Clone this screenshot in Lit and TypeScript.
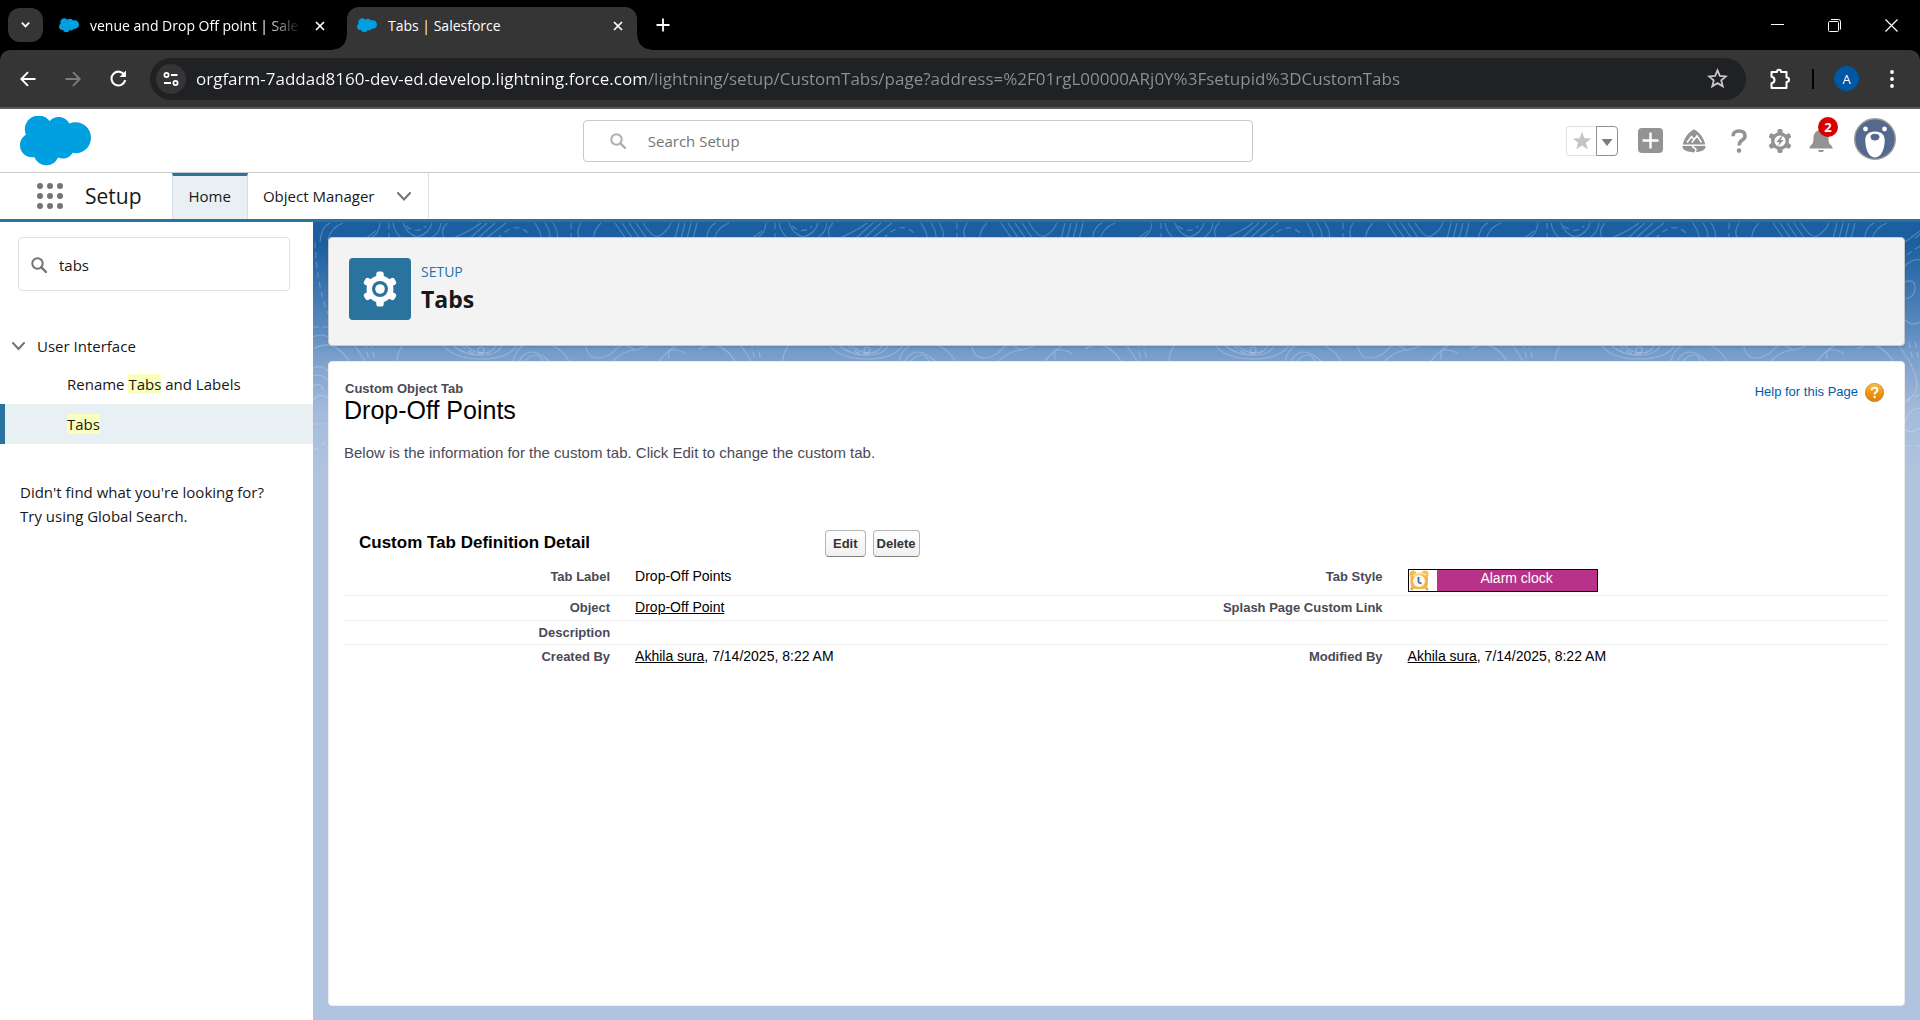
import { LitElement, html, svg, css } from "lit";
import { customElement } from "lit/decorators.js";

const cloud = svg`<path fill="#009fdf" d="M10.006 5.415a4.195 4.195 0 013.045-1.306c1.56 0 2.954.9 3.69 2.205.63-.3 1.35-.45 2.1-.45 2.85 0 5.159 2.34 5.159 5.22s-2.31 5.22-5.176 5.22c-.345 0-.69-.044-1.02-.104a3.75 3.75 0 01-3.3 1.95c-.6 0-1.155-.15-1.65-.375A4.314 4.314 0 018.88 20.4a4.302 4.302 0 01-4.05-2.82c-.27.062-.54.076-.825.076-2.204 0-4.005-1.8-4.005-4.05 0-1.5.811-2.805 2.01-3.51-.255-.57-.39-1.2-.39-1.846 0-2.58 2.1-4.65 4.65-4.65 1.53 0 2.85.705 3.72 1.8"/>`;

const teeth = [0, 60, 120].map(
  (a) => svg`<rect x="-3.4" y="-16" width="6.8" height="32" rx="2.4" transform="rotate(${a})"/>`
);

const magnifier = html`<svg class="magnifier" viewBox="0 0 16 16" width="16" height="16" aria-hidden="true">
  <circle cx="6.5" cy="6.5" r="5.2" fill="none" stroke="currentColor" stroke-width="2"/>
  <path d="M10.4 10.4L15 15" stroke="currentColor" stroke-width="2.4" stroke-linecap="round"/>
</svg>`;

const closeIcon = html`<svg viewBox="0 0 10 10" width="10" height="10" aria-hidden="true">
  <path d="M1 1L9 9M9 1L1 9" stroke="currentColor" stroke-width="1.7"/>
</svg>`;

@customElement("browser-chrome")
class BrowserChrome extends LitElement {
  static styles = css`
    :host { display: block; color: #fff; font-family: "Open Sans", "Noto Sans", sans-serif; font-size: 14px; }
    button { all: unset; display: flex; align-items: center; justify-content: center; box-sizing: border-box; flex: none; }
    svg { display: block; flex: none; }
    .strip { display: flex; align-items: center; height: 50px; background: #000; box-sizing: border-box; padding-left: 8px; }
    .search { width: 35px; height: 34px; border-radius: 12px; background: #353535; }
    .tab { display: flex; align-items: center; box-sizing: border-box; height: 43px; align-self: flex-end; padding: 0 10px 6px 10px; white-space: nowrap; }
    .idle { width: 304px; padding-left: 16px; padding-right: 18px; }
    .current { position: relative; width: 290px; background: #353535; border-radius: 12px 12px 0 0; }
    .current::before, .current::after { content: ""; position: absolute; bottom: 0; width: 14px; height: 14px; }
    .current::before { left: -14px; background: radial-gradient(circle at 0 0, transparent 13px, #353535 14px); }
    .current::after { right: -14px; background: radial-gradient(circle at 100% 0, transparent 13px, #353535 14px); }
    .title { flex: 1; margin-left: 11px; }
    .fade { mask-image: linear-gradient(90deg, #000 calc(100% - 36px), transparent); margin-right: 10px; }
    .close { width: 18px; height: 24px; }
    .plus { width: 24px; height: 24px; margin-left: 14px; }
    .window { display: flex; margin-left: auto; }
    .window button { width: 57px; height: 50px; }
    .barwrap { background: #000; }
    .bar { display: flex; align-items: center; height: 59px; box-sizing: border-box; padding: 0 16px 0 8px; background: #353535; border-bottom: 2px solid #5c5c5c; border-radius: 10px 10px 0 0; }
    .nav { width: 40px; height: 40px; margin-right: 5px; }
    .dim { color: #7d7d7d; }
    .omni { flex: 1; display: flex; align-items: center; height: 42px; border-radius: 21px; background: #202124; margin-left: 7px; padding: 0 18px 0 6px; }
    .site { width: 30px; height: 30px; border-radius: 15px; background: #353535; }
    .url { all: unset; flex: 1; margin-left: 10px; height: 40px; font: 17px "Open Sans", "Noto Sans", sans-serif; color: transparent;
      background: linear-gradient(90deg, #fff 450px, #8f9194 450px); background-clip: text; -webkit-background-clip: text; }
    .ext { width: 40px; height: 40px; margin-left: 14px; }
    .rule { width: 2px; height: 20px; background: #000; margin: 0 20px 0 12px; }
    .user { width: 25px; height: 25px; border-radius: 13px; background: #0057a3; font-size: 13px; }
    .more { width: 24px; height: 40px; margin-left: 21px; }
  `;

  render() {
    return html`
      <div class="strip">
        <button class="search" aria-label="Search tabs">
          <svg viewBox="0 0 12 8" width="11" height="8"><path d="M2 1.5L6 5.5L10 1.5" fill="none" stroke="#fff" stroke-width="2"/></svg>
        </button>
        <div class="tab idle">
          <svg viewBox="0 3.5 24 17.5" width="20" height="15">${cloud}</svg>
          <span class="title fade">venue and Drop Off point | Sale</span>
          <button class="close" aria-label="Close tab">${closeIcon}</button>
        </div>
        <div class="tab current">
          <svg viewBox="0 3.5 24 17.5" width="20" height="15">${cloud}</svg>
          <span class="title">Tabs | Salesforce</span>
          <button class="close" aria-label="Close tab">${closeIcon}</button>
        </div>
        <button class="plus" aria-label="New tab">
          <svg viewBox="0 0 14 14" width="14" height="14"><path d="M7 .5V13.5M.5 7H13.5" stroke="#fff" stroke-width="1.8"/></svg>
        </button>
        <div class="window">
          <button aria-label="Minimize"><svg viewBox="0 0 13 13" width="13" height="13"><path d="M0 5.5H13" stroke="#fff"/></svg></button>
          <button aria-label="Restore"><svg viewBox="0 0 13 13" width="13" height="13" fill="none" stroke="#fff"><rect x=".5" y="2.5" width="10" height="10" rx="1"/><path d="M3 .5H10.500Q12.500 .5 12.500 2.500V10.500"/></svg></button>
          <button aria-label="Close"><svg viewBox="0 0 13 13" width="13" height="13"><path d="M.5 .5L12.500 12.500M12.500 .5L.5 12.500" stroke="#fff" stroke-width="1.200"/></svg></button>
        </div>
      </div>
      <div class="barwrap"><div class="bar">
        <button class="nav" aria-label="Back"><svg viewBox="0 0 16 16" width="16" height="16"><path d="M15.500 8H1.500M8 1.200L1.300 8L8 14.800" fill="none" stroke="#fff" stroke-width="1.900"/></svg></button>
        <button class="nav dim" aria-label="Forward"><svg viewBox="0 0 16 16" width="16" height="16"><path d="M.5 8H14.500M8 1.200L14.700 8L8 14.800" fill="none" stroke="currentColor" stroke-width="1.900"/></svg></button>
        <button class="nav" aria-label="Reload"><svg viewBox="0 0 16 16" width="17" height="17"><path d="M13.600 4.800A6.500 6.500 0 1 0 14.300 9.500" fill="none" stroke="#fff" stroke-width="1.900"/><path d="M15 .5V6.500H9Z" fill="#fff"/></svg></button>
        <div class="omni">
          <button class="site" aria-label="View site information">
            <svg viewBox="0 0 16 14" width="16" height="14" fill="none" stroke="#fff" stroke-width="1.800"><circle cx="3.500" cy="3" r="2.100"/><path d="M8 3H14.500M1 11H8"/><circle cx="12.500" cy="11" r="2.100"/></svg>
          </button>
          <input class="url" aria-label="Address" spellcheck="false" value="orgfarm-7addad8160-dev-ed.develop.lightning.force.com/lightning/setup/CustomTabs/page?address=%2F01rgL00000ARj0Y%3Fsetupid%3DCustomTabs">
          <button aria-label="Bookmark this tab"><svg viewBox="0 0 20 20" width="21" height="21"><path d="M10 2.200L12.200 7.500L18 8L13.600 11.800L15 17.500L10 14.400L5 17.500L6.400 11.800L2 8L7.800 7.500Z" fill="none" stroke="#c7c7c7" stroke-width="1.700"/></svg></button>
        </div>
        <button class="ext" aria-label="Extensions">
          <svg viewBox="0 0 22 22" width="22" height="22"><path d="M3 4H8Q8 1.800 10 1.800T12 4H17.500V9.500Q20 9.500 20 11.700T17.500 14V20H2.500V15.200Q5.500 14.800 5.500 12T2.500 8.800V4Z" fill="none" stroke="#fff" stroke-width="2" stroke-linejoin="round"/></svg>
        </button>
        <span class="rule"></span>
        <button class="user" aria-label="Profile">A</button>
        <button class="more" aria-label="Menu"><svg viewBox="0 0 4 18" width="4" height="18" fill="#fff"><circle cx="2" cy="2" r="1.900"/><circle cx="2" cy="9" r="1.900"/><circle cx="2" cy="16" r="1.900"/></svg></button>
      </div></div>
    `;
  }
}

@customElement("global-header")
class GlobalHeader extends LitElement {
  static styles = css`
    :host { display: block; background: #fff; color: #181818; font-family: "Open Sans", "Noto Sans", sans-serif; font-size: 15px; }
    button { all: unset; display: flex; align-items: center; justify-content: center; box-sizing: border-box; flex: none; }
    svg { display: block; flex: none; }
    .top { display: grid; grid-template-columns: 7fr 670px 8fr; align-items: center; height: 64px; box-sizing: border-box; border-bottom: 1px solid #c9c9c9; padding: 0 24px 0 20px; }
    .find { display: flex; align-items: center; height: 42px; box-sizing: border-box; border: 1px solid #c9c9c9; border-radius: 4px; padding: 0 26px; color: #aeaeae; }
    .find input { all: unset; flex: 1; margin-left: 22px; color: #747474; }
    .find input::placeholder { color: #747474; opacity: 1; }
    .tools { display: flex; align-items: center; justify-content: flex-end; }
    .fav { height: 30px; width: 30px; border: 1px solid #e0e0e0; border-right: 0; border-radius: 4px 0 0 4px; }
    .favmenu { height: 30px; width: 22px; border: 1px solid #8f8f8f; border-radius: 0 4px 4px 0; margin-right: 20px; padding-top: 4px; }
    .astro { margin-left: 19px; }
    .help { margin-left: 25px; }
    .gear { margin-left: 21px; }
    .bell { position: relative; margin-left: 17px; }
    .badge { position: absolute; left: 9px; top: -12px; width: 20px; height: 20px; border-radius: 10px; background: #d80000; color: #fff; font-size: 13px; line-height: 20px; font-weight: 700; text-align: center; }
    .avatar { margin: 0 0 4px 21px; }
    .nav { display: flex; align-items: stretch; height: 49px; box-sizing: border-box; border-bottom: 3px solid #2a739e; padding-left: 37px; }
    .waffle { width: 26px; }
    .app { font-size: 21px; line-height: 46px; margin: 0 30px 0 22px; }
    .link { color: inherit; text-decoration: none; display: flex; align-items: center; padding: 0 15px; }
    .home { background: #e9f0f4; border-top: 3px solid #2a739e; border-left: 1px solid #d8dde6; border-right: 1px solid #d8dde6; padding: 0 16px 4px; }
    .object { padding: 0 11px 1px 15px; }
    .chev { padding: 0 17px 0 12px; border-right: 1px solid #e0e0e0; }
  `;

  render() {
    const dots = [3, 13, 23].flatMap((y) => [3, 13, 23].map((x) => svg`<circle cx=${x} cy=${y} r="3"/>`));
    return html`
      <header class="top">
        <svg viewBox="0 3.900 24 16.600" width="71" height="50" role="img" aria-label="Salesforce">${cloud}</svg>
        <label class="find">${magnifier}<input type="search" placeholder="Search Setup" aria-label="Search Setup"></label>
        <div class="tools">
          <button class="fav" aria-label="Favorite this item"><svg viewBox="0 0 20 20" width="20" height="20"><path fill="#c4c4c4" d="M10 .8L12.400 7.200L19.200 7.500L13.900 11.700L15.700 18.300L10 14.500L4.300 18.300L6.100 11.700L.8 7.500L7.600 7.200Z"/></svg></button>
          <button class="favmenu" aria-label="Favorites list"><svg viewBox="0 0 12 7" width="12" height="7"><path fill="#7c7c7c" d="M.5 0H11.500L6 7Z"/></svg></button>
          <button aria-label="Global actions"><svg viewBox="0 0 25 25" width="25" height="25"><rect width="25" height="25" rx="4" fill="#939393"/><path d="M12.500 4.500V20.500M4.500 12.500H20.500" stroke="#fff" stroke-width="2.400"/></svg></button>
          <button class="astro" aria-label="Guidance center">
            <svg viewBox="0 0 24 24" width="24" height="24">
              <path fill="#939393" d="M12 .5C14 1.200 17 3.400 19.500 7C21.800 10.300 23.300 14 23.500 18C23.500 20 21 21.600 18 22.600Q12 24.200 6 22.600C3 21.600 .5 20 .5 18C.7 14 2.200 10.300 4.500 7C7 3.400 10 1.200 12 .5Z"/>
              <path d="M0 16.200H24" stroke="#fff" stroke-width="1.400"/>
              <path d="M5 13.500L9.500 7.500L12 10.800L15 6.800L19.500 13.500M9.800 13.500L12 10.800M15 6.800V9" fill="none" stroke="#fff" stroke-width="1.500"/>
              <path d="M11.500 16.500Q9.500 18 12.500 19T12.500 24" fill="none" stroke="#fff" stroke-width="1.500"/>
            </svg>
          </button>
          <button class="help" aria-label="Help"><svg viewBox="0 0 16 24" width="16" height="24"><path d="M2 7.200Q2 2 8 2T14 7Q14 9.500 11 11.300Q8.200 13 8.200 16.500" fill="none" stroke="#939393" stroke-width="3.600"/><circle cx="8" cy="21.600" r="2.300" fill="#939393"/></svg></button>
          <button class="gear" aria-label="Setup">
            <svg viewBox="-16 -16 32 32" width="24" height="24"><g fill="#939393"><circle r="12"/>${teeth}</g><circle r="7.400" fill="#fff"/><path fill="#939393" d="M1.500 -6L-5 1.500H-1L-2.500 6.500L5 -1.500H.8L3.500 -6Z"/></svg>
          </button>
          <button class="bell" aria-label="Notifications">
            <svg viewBox="0 0 24 24" width="24" height="24" fill="#939393"><path d="M12 1C7.500 1 4.500 4.500 4.500 8.500C4.500 14 3.500 15.200 1.200 17Q.2 18 .5 19.500H23.500Q23.800 18 22.800 17C20.500 15.200 19.500 14 19.500 8.500C19.500 4.500 16.500 1 12 1Z"/><path d="M9 21H15Q14.500 23.300 12 23.300T9 21Z"/></svg>
            <span class="badge">2</span>
          </button>
          <button class="avatar" aria-label="View profile">
            <svg viewBox="0 0 42 42" width="42" height="42"><circle cx="21" cy="21" r="20.300" fill="#54698d" stroke="#9c9c9c" stroke-width="1.400"/><circle cx="11.500" cy="11" r="2.400" fill="#fff"/><circle cx="30.500" cy="11" r="2.400" fill="#fff"/><path fill="#fff" d="M21 13.500C14 13.500 11 17.500 11.300 23C11.600 31 14.500 39.500 21 39.500S30.400 31 30.700 23C31 17.500 28 13.500 21 13.500Z"/><path fill="#54698d" d="M16.500 18Q17.500 15.800 21 15.800T25.500 18Q25.500 22.500 21 22.500T16.500 18Z"/></svg>
          </button>
        </div>
      </header>
      <nav class="nav" aria-label="Setup">
        <button class="waffle" aria-label="App launcher"><svg viewBox="0 0 26 26" width="26" height="26" fill="#747474">${dots}</svg></button>
        <span class="app">Setup</span>
        <a class="link home" href="#home" aria-current="page">Home</a>
        <a class="link object" href="#objects">Object Manager</a>
        <button class="chev" aria-label="Object Manager list"><svg viewBox="0 0 14 9" width="14" height="9"><path d="M1 1L7 7.500L13 1" fill="none" stroke="#747474" stroke-width="2" stroke-linecap="round"/></svg></button>
      </nav>
    `;
  }
}

@customElement("setup-sidebar")
class SetupSidebar extends LitElement {
  static styles = css`
    :host { display: block; background: #fff; color: #181818; font-family: "Open Sans", "Noto Sans", sans-serif; font-size: 15px; line-height: 24px; }
    svg { display: block; flex: none; }
    mark { background: #faffbd; color: inherit; }
    .find { display: flex; align-items: center; height: 54px; box-sizing: border-box; border: 1px solid #e0e0e0; border-radius: 4px; margin: 15px 23px 0 18px; padding: 2px 12px 0; color: #747474; }
    .find input { all: unset; flex: 1; min-width: 0; margin-left: 12px; color: #181818; }
    .group { all: unset; display: flex; align-items: center; margin-top: 43px; padding-left: 12px; height: 24px; gap: 12px; }
    .items { list-style: none; margin: 6px 0 0; padding: 0; }
    .item { display: block; box-sizing: border-box; height: 40px; padding: 8px 0 0 62px; border-left: 5px solid transparent; color: inherit; text-decoration: none; }
    .selected { background: #e9f0f4; border-left-color: #2a739e; }
    .hint { margin: 36px 20px; }
  `;

  render() {
    return html`
      <label class="find">${magnifier}<input type="text" .value=${"tabs"} aria-label="Quick find"></label>
      <button class="group" aria-expanded="true"><svg viewBox="0 0 13 9" width="13" height="9"><path d="M1 1L6.500 7L12 1" fill="none" stroke="#747474" stroke-width="2" stroke-linecap="round"/></svg>User Interface</button>
      <ul class="items">
        <li><a class="item" href="#rename">Rename <mark>Tabs</mark> and Labels</a></li>
        <li><a class="item selected" href="#tabs" aria-current="page"><mark>Tabs</mark></a></li>
      </ul>
      <p class="hint">Didn't find what you're looking for?<br>Try using Global Search.</p>
    `;
  }
}

@customElement("topo-backdrop")
class TopoBackdrop extends LitElement {
  static styles = css`
    :host { display: block; overflow: hidden; background: linear-gradient(180deg, #1b5fa0 0, #1b5fa0 22px, #5c8bbf 108px, #7da1cd 138px, #a3bbdc 190px, #b0c4df 250px); }
    svg { display: block; width: 100%; height: 250px; }
  `;

  render() {
    return html`<svg aria-hidden="true">
      <defs><pattern id="topo" width="386" height="250" patternUnits="userSpaceOnUse">
        <g fill="none" stroke="#fff" stroke-opacity=".22" stroke-width="1.200">
          <path d="M17 1C12 3 8 8 7 20M30 1Q17 6 15 18M67 1Q66 12 58 16M80 1Q82 12 90 17M128 1Q127 12 116 17M134 1Q126 9 132 17M119 1Q116 12 104 15Q94 12 90 1M138 17Q156 10 168 1M156 17L174 1M164 17L182 1M172 17L193 1M222 1Q229 12 228 17M232 1Q238 10 237 17M240 1Q246 10 244 17M268 1Q262 10 267 17M288 1Q280 9 281 17M302 1L313 17M309 1L320 17M316 1L327 17M323 1L334 17M330 1Q340 17 346 14Q354 10 358 1M366 1L362 17M372 1L368 17M378 1L374 17M384 1L380 17"/>
          <path stroke-dasharray="6 4" d="M76 1V17M93 4Q104 13 113 4M184 17Q203 -4 218 14M258 1V17M2 20Q4 65 15 92M0 105H15"/>
          <path d="M0 115Q8 111 15 115M0 127Q20 115 36 139M84 139Q84 128 93 120M128 120Q138 137 168 137T206 120M137 120Q148 133 168 133T190 120M150 120Q158 131 170 131T184 120M200 139Q204 119 232 119M206 139Q216 121 236 139M212 139Q224 127 230 139M228 120Q248 124 256 139M272 120Q274 136 284 136Q296 136 304 126Q310 120 322 128M300 139Q310 129 322 128Q332 126 344 120M356 137Q354 126 362 128Q370 129 373 132M346 139Q368 112 386 124M0 146Q10 142 15 149M0 154Q8 151 15 158M0 164Q8 160 10 168M0 178Q8 170 15 176"/>
          <circle cx="168" cy="128" r="3"/>
          <path stroke-dasharray="6 4" d="M52 120L56 139M58 120L62 139M148 122Q160 137 176 130M0 202H15M0 228Q10 224 15 216"/>
          <path d="M63 9L48 20M48 44Q56 36 63 38M48 60Q58 56 58 66T48 77M48 98Q56 105 63 100M42 124Q60 148 60 164Q60 172 50 178M63 186Q52 186 48 200M63 206Q54 212 48 208"/>
          <path stroke-dasharray="6 4" d="M63 24L48 34M48 180L63 172M48 224H63"/>
        </g>
      </pattern></defs>
      <rect width="100%" height="250" fill="url(#topo)"/>
    </svg>`;
  }
}

@customElement("tab-detail")
class TabDetail extends LitElement {
  static styles = css`
    :host { display: flex; flex-direction: column; gap: 15px; box-sizing: border-box; padding: 15px 15px 14px; }
    svg { display: block; flex: none; }
    .head { display: flex; align-items: flex-start; gap: 10px; height: 109px; box-sizing: border-box; background: #f3f3f3; border: 1px solid #c9c9c9; border-radius: 4px; padding: 20px; box-shadow: 0 2px 2px rgba(0, 0, 0, .1); font-family: "Open Sans", "Noto Sans", sans-serif; color: #181818; }
    .kicker { margin: 4px 0 0; font-size: 14px; line-height: 20px; color: #2574a9; }
    .page { margin: 0; font-size: 23px; line-height: 34px; font-weight: 700; }
    .card { flex: 1; background: #fff; border: 1px solid #ecebea; border-radius: 4px; box-sizing: border-box; padding: 18px 15px; font-family: "Liberation Sans", Arial, sans-serif; font-size: 14px; color: #000; }
    .intro { display: flex; justify-content: space-between; align-items: flex-start; }
    .type { margin: 0 1px; font-size: 13px; line-height: 18px; font-weight: 700; color: #4a4a56; }
    .name { margin: 0; font-size: 25px; line-height: 24px; font-weight: 400; }
    .help { display: flex; align-items: center; gap: 7px; margin: 1px 5px 0 0; font-size: 13px; line-height: 22px; color: #015ba7; text-decoration: none; }
    .info { margin: 20px 0 65px; font-size: 15px; line-height: 22px; color: #4a4a56; }
    .section { display: flex; align-items: center; gap: 7px; height: 28px; padding-left: 15px; }
    .section h3 { margin: 0; width: 30%; font-size: 17px; }
    .btn { height: 27px; border: 1px solid #b5b5b5; border-bottom-color: #7f7f7f; border-radius: 4px; background: linear-gradient(#fff, #f0f0f0); font: 700 13px "Liberation Sans", Arial, sans-serif; color: #333; padding: 0 3px; }
    .edit { padding: 0 7px; }
    table { width: 100%; border-collapse: collapse; table-layout: fixed; margin-top: 5px; line-height: 17px; }
    .l { width: 18%; }
    .v { width: 32%; }
    th, td { vertical-align: top; padding: 3px 12px; border-bottom: 1px solid #ececec; }
    th { text-align: right; font-size: 13px; color: #4a4a56; }
    td { padding-left: 13px; text-align: left; }
    td a { color: inherit; }
    .first th, .first td { padding-top: 6px; }
    .second th, .second td { padding-bottom: 4px; }
    .last th, .last td { border-bottom: 0; }
    .style { display: flex; width: 190px; height: 23px; box-sizing: border-box; border: 1px solid #000; background: #b83289; color: #fff; text-align: center; margin-top: 1px; }
    .clock { width: 28px; background: #fff; }
    .style span { flex: 1; line-height: 16px; }
  `;

  render() {
    const person = html`<a href="#user">Akhila sura</a>, 7/14/2025, 8:22 AM`;
    return html`
      <header class="head">
        <svg viewBox="-31 -31 62 62" width="62" height="62" aria-hidden="true"><rect x="-31" y="-31" width="62" height="62" rx="4" fill="#2a739e"/><g fill="#fff" transform="scale(1.100)"><circle r="12.200"/>${teeth}</g><circle r="8" fill="#2a739e"/><circle r="4.800" fill="#fff"/></svg>
        <div><p class="kicker">SETUP</p><h1 class="page">Tabs</h1></div>
      </header>
      <section class="card">
        <div class="intro">
          <div><p class="type">Custom Object Tab</p><h2 class="name">Drop-Off Points</h2></div>
          <a class="help" href="#help">Help for this Page
            <svg viewBox="0 0 19 19" width="19" height="19" aria-hidden="true"><defs><linearGradient id="g" x2="0" y2="1"><stop stop-color="#f9bf52"/><stop offset=".55" stop-color="#f0930d"/><stop offset="1" stop-color="#d9820c"/></linearGradient></defs><circle cx="9.500" cy="9.500" r="9.200" fill="url(#g)" stroke="#b4741c" stroke-width=".6"/><path d="M6.700 7.200Q6.700 4.700 9.600 4.700T12.400 7Q12.400 8.300 10.900 9.200Q9.600 10 9.600 11.500" fill="none" stroke="#fff" stroke-width="1.900"/><circle cx="9.600" cy="14" r="1.200" fill="#fff"/></svg>
          </a>
        </div>
        <p class="info">Below is the information for the custom tab. Click Edit to change the custom tab.</p>
        <div class="section"><h3>Custom Tab Definition Detail</h3><button class="btn edit">Edit</button><button class="btn">Delete</button></div>
        <table>
          <colgroup><col class="l"><col class="v"><col class="l"><col class="v"></colgroup>
          <tbody>
            <tr class="first"><th scope="row">Tab Label</th><td>Drop-Off Points</td><th scope="row">Tab Style</th>
              <td><div class="style"><svg class="clock" viewBox="0 0 28 21" height="21" aria-hidden="true">
                <circle cx="4" cy="4" r="3.500" fill="#f5bd55"/><circle cx="16" cy="4" r="3.500" fill="#f5bd55"/><path d="M4 17L2 20M16 17L19 20" stroke="#e2a24a" stroke-width="2.400"/><rect x="1.500" y="3" width="17.500" height="16" rx="5" fill="#f3b54c"/><path d="M4 6Q10 1 17 5" stroke="#fbdf9f" stroke-width="2" fill="none"/><circle cx="10" cy="11" r="6" fill="#fdf8ec"/><path d="M9.500 7V12.500M9.500 12.500L12.500 13.500" fill="none" stroke="#3b68a8" stroke-width="1.800"/></svg><span>Alarm clock</span></div></td></tr>
            <tr class="second"><th scope="row">Object</th><td><a href="#object">Drop-Off Point</a></td><th scope="row">Splash Page Custom Link</th><td></td></tr>
            <tr><th scope="row">Description</th><td></td><td></td><td></td></tr>
            <tr class="last"><th scope="row">Created By</th><td>${person}</td><th scope="row">Modified By</th><td>${person}</td></tr>
          </tbody>
        </table>
      </section>
    `;
  }
}

@customElement("app-root")
class AppRoot extends LitElement {
  static styles = css`
    :host { display: flex; flex-direction: column; min-height: 100vh; }
    .body { flex: 1; display: grid; grid-template-columns: 313px 1fr; }
    .side { grid-area: 1 / 1; }
    .back, .main { grid-area: 1 / 2; min-width: 0; }
    .main { z-index: 1; }
  `;

  render() {
    return html`
      <browser-chrome></browser-chrome>
      <global-header></global-header>
      <div class="body">
        <setup-sidebar class="side"></setup-sidebar>
        <topo-backdrop class="back"></topo-backdrop>
        <tab-detail class="main"></tab-detail>
      </div>
    `;
  }
}
